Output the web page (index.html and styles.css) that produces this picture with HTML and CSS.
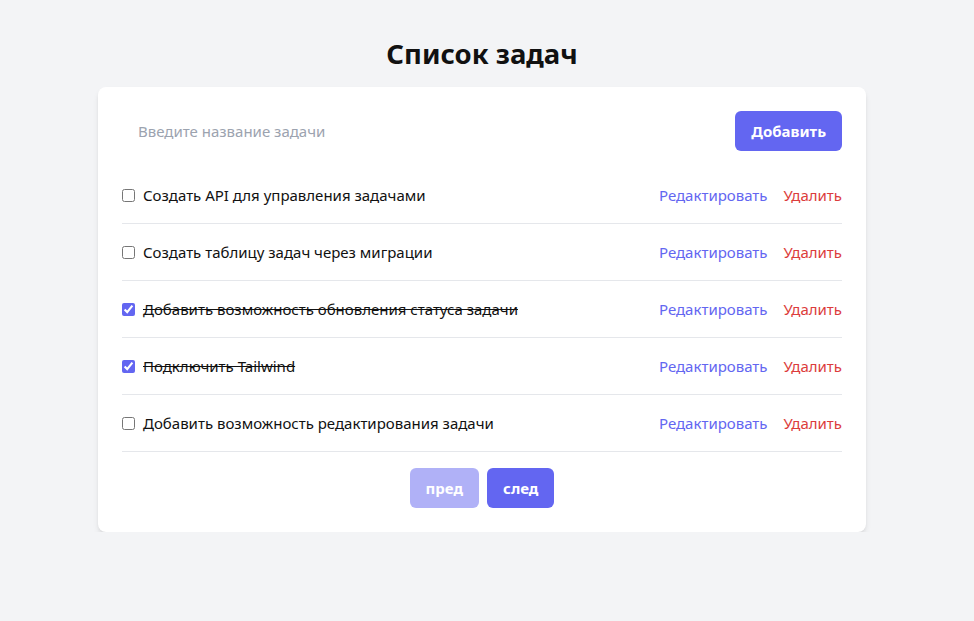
FILE: index.html
```html
<!DOCTYPE html>
<html lang="ru">
<head>
<meta charset="utf-8">
<title>Список задач</title>
<link rel="stylesheet" href="styles.css">
</head>
<body>
<div class="page">
  <h1 class="title">Список задач</h1>
  <div class="card">
    <form class="add-form">
      <input class="add-input" type="text" placeholder="Введите название задачи">
      <button class="btn" type="button">Добавить</button>
    </form>
    <ul class="tasks">
      <li class="task">
        <label class="task-label"><input type="checkbox" class="task-check"><span>Создать API для управления задачами</span></label>
        <div class="actions"><a class="edit">Редактировать</a><a class="delete">Удалить</a></div>
      </li>
      <li class="task">
        <label class="task-label"><input type="checkbox" class="task-check"><span>Создать таблицу задач через миграции</span></label>
        <div class="actions"><a class="edit">Редактировать</a><a class="delete">Удалить</a></div>
      </li>
      <li class="task">
        <label class="task-label"><input type="checkbox" class="task-check" checked><span class="done">Добавить возможность обновления статуса задачи</span></label>
        <div class="actions"><a class="edit">Редактировать</a><a class="delete">Удалить</a></div>
      </li>
      <li class="task">
        <label class="task-label"><input type="checkbox" class="task-check" checked><span class="done">Подключить Tailwind</span></label>
        <div class="actions"><a class="edit">Редактировать</a><a class="delete">Удалить</a></div>
      </li>
      <li class="task">
        <label class="task-label"><input type="checkbox" class="task-check"><span>Добавить возможность редактирования задачи</span></label>
        <div class="actions"><a class="edit">Редактировать</a><a class="delete">Удалить</a></div>
      </li>
    </ul>
    <div class="pager">
      <button class="btn btn-disabled" type="button">пред</button>
      <button class="btn" type="button">след</button>
    </div>
  </div>
</div>
</body>
</html>
```

FILE: styles.css
```css
* { box-sizing: border-box; }
html, body { margin: 0; padding: 0; }
body {
  background: #f3f4f6;
  font-family: "Noto Sans", "Open Sans", sans-serif;
  color: #111;
  font-size: 15px;
  padding-right: 10px;
}
.page {
  max-width: 768px;
  margin: 0 auto;
  padding-top: 36px;
}
.title {
  margin: 0 0 15px;
  text-align: center;
  font-size: 27.5px;
  line-height: 36px;
  font-weight: 700;
}
.card {
  background: #fff;
  border-radius: 8px;
  box-shadow: 0 4px 6px -1px rgba(0,0,0,0.1), 0 2px 4px -2px rgba(0,0,0,0.1);
  padding: 24px;
}
.add-form {
  display: flex;
  gap: 8px;
  margin: 0 0 16px;
}
.add-input {
  flex: 1;
  border: none;
  outline: none;
  padding: 8px 16px;
  font: inherit;
  color: #111;
}
.add-input::placeholder { color: #9ca3af; }
.btn {
  background: #6366f1;
  color: #fff;
  border: none;
  border-radius: 6px;
  padding: 8px 16px;
  height: 40px;
  font: inherit;
  font-weight: 700;
  cursor: pointer;
}
.btn-disabled { opacity: 0.5; cursor: default; }
.tasks {
  list-style: none;
  margin: 0;
  padding: 0;
}
.task {
  display: flex;
  align-items: center;
  justify-content: space-between;
  padding: 16px 0;
  border-bottom: 1px solid #e5e7eb;
  line-height: 24px;
}
.task-label {
  display: flex;
  align-items: center;
}
.task-check {
  margin: 0 8px 0 0;
  width: 13px;
  height: 13px;
  accent-color: #6366f1;
}
.done { text-decoration: line-through; }
.actions { display: flex; gap: 16px; }
.edit { color: #6366f1; cursor: pointer; }
.delete { color: #dc3c3c; cursor: pointer; }
.pager {
  display: flex;
  justify-content: center;
  gap: 8px;
  margin-top: 16px;
}
```
